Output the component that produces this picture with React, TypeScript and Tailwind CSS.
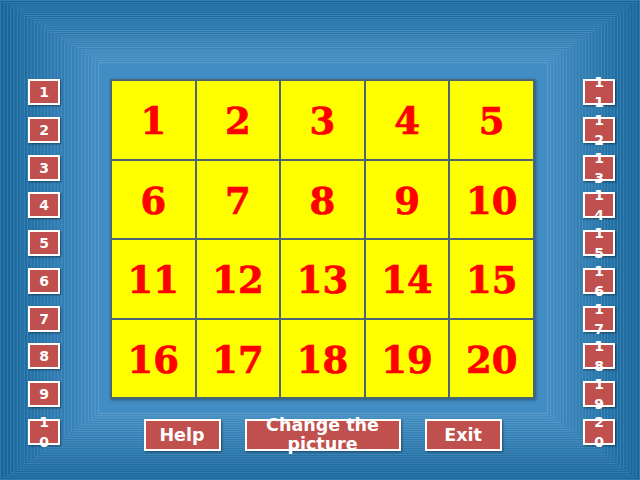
import React from "react";

const N = 30;
function lerp(a: number, b: number, t: number) {
  return a + (b - a) * t;
}
function mix(c1: number[], c2: number[], t: number) {
  return `rgb(${c1.map((v, i) => Math.round(lerp(v, c2[i], t))).join(",")})`;
}

function Background() {
  const rects = [];
  const dark = [22, 102, 156];
  const light = [66, 142, 196];
  for (let i = 0; i < N; i++) {
    const t = i / (N - 1);
    const x = lerp(0, 98, t);
    const y = lerp(0, 62, t);
    const r = lerp(640, 548, t);
    const b = lerp(480, 414, t);
    rects.push(
      <rect
        key={i}
        x={x + 0.5}
        y={y + 0.5}
        width={r - x - 1}
        height={b - y - 1}
        fill={mix(dark, light, Math.pow(t, 1.1))}
        stroke="rgba(255,255,255,0.14)"
        strokeWidth={1}
      />
    );
  }
  return (
    <svg className="absolute inset-0" width={640} height={480} viewBox="0 0 640 480">
      {rects}
    </svg>
  );
}

function SmallBox({ n }: { n: number }) {
  return (
    <div className="w-[32px] h-[26px] border-2 border-white bg-[#c0504d] shadow-[1px_1px_2px_rgba(0,0,0,0.45)] flex items-center justify-center px-[6px]">
      <span className="block w-[16px] text-center break-all font-['DejaVu_Sans',sans-serif] font-bold text-[14px] leading-[20px] text-white">
        {n}
      </span>
    </div>
  );
}

function BigButton({ label, w }: { label: string; w: string }) {
  return (
    <div
      className={`${w} h-[32px] border-2 border-white bg-[#c0504d] shadow-[1px_1px_2px_rgba(0,0,0,0.45)] flex items-center justify-center`}
    >
      <span className="block text-center font-['DejaVu_Sans',sans-serif] font-bold text-[17.5px] leading-[19px] text-white">
        {label}
      </span>
    </div>
  );
}

export default function App() {
  const nums = Array.from({ length: 20 }, (_, i) => i + 1);
  return (
    <div className="relative w-[640px] h-[480px] overflow-hidden bg-[#16649a]">
      <Background />
      <div className="relative flex items-start pt-[79px]">
        <div className="ml-[28px] w-[32px] h-[366px] flex flex-col justify-between">
          {nums.slice(0, 10).map((n) => (
            <SmallBox key={n} n={n} />
          ))}
        </div>
        <div className="ml-[50px] w-[425px] flex flex-col">
          <div className="h-[320px] grid grid-cols-5 grid-rows-4 gap-[2px] p-[2px] bg-[#4a6676] shadow-[1px_1px_3px_rgba(0,0,0,0.4)]">
            {nums.map((n) => (
              <div key={n} className="bg-[#ffff00] flex items-center justify-center pt-[4px]">
                <span className="font-['DejaVu_Serif',serif] font-bold text-[37px] leading-none text-[#ff0000] [-webkit-text-stroke:0.7px_#ff0000]">
                  {n}
                </span>
              </div>
            ))}
          </div>
          <div className="mt-[20px] flex justify-center gap-[24px]">
            <BigButton label="Help" w="w-[77px]" />
            <BigButton label="Change the picture" w="w-[156px]" />
            <BigButton label="Exit" w="w-[77px]" />
          </div>
        </div>
        <div className="ml-[48px] w-[32px] h-[366px] flex flex-col justify-between">
          {nums.slice(10, 20).map((n) => (
            <SmallBox key={n} n={n} />
          ))}
        </div>
      </div>
    </div>
  );
}
